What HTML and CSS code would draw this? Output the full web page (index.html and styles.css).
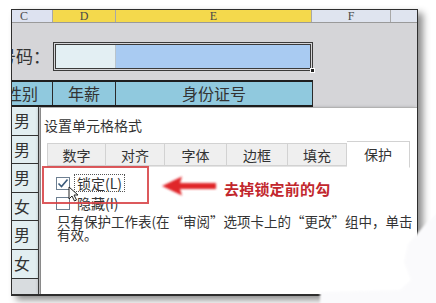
FILE: index.html
```html
<!DOCTYPE html>
<html lang="zh">
<head>
<meta charset="utf-8">
<link rel="stylesheet" href="styles.css">
</head>
<body>
<div class="page">
  <div class="sheet">
    <div class="colhead">
      <div class="ch ch-c">C</div>
      <div class="ch ch-d">D</div>
      <div class="ch ch-e">E</div>
      <div class="ch ch-f">F</div>
      <div class="ch ch-g"></div>
    </div>
    <div class="inputrow">
      <div class="lbl"><span>号码：</span></div>
      <div class="inbox">
        <div class="in-d"></div>
        <div class="in-e"></div>
        <span class="handle"></span>
      </div>
    </div>
    <div class="headrow">
      <div class="hc hc-c"><span>性别</span></div>
      <div class="hc hc-d">年薪</div>
      <div class="hc hc-e">身份证号</div>
    </div>
    <div class="datacol">
      <div class="dc">男</div>
      <div class="dc">男</div>
      <div class="dc">男</div>
      <div class="dc">女</div>
      <div class="dc">男</div>
      <div class="dc">女</div>
      <div class="dc dc-empty"></div>
    </div>

    <div class="dialog">
      <div class="dtitle">设置单元格格式</div>
      <div class="tabs">
        <div class="tab t1">数字</div>
        <div class="tab t2">对齐</div>
        <div class="tab t3">字体</div>
        <div class="tab t4">边框</div>
        <div class="tab t5">填充</div>
        <div class="tab t6 active">保护</div>
      </div>
      <div class="dbody">
        <div class="chkrow">
          <span class="chk">
            <svg width="14" height="13" viewBox="0 0 14 13"><path d="M2.5 6.5 L5.5 9.5 L11.5 2.5" fill="none" stroke="#3a5a7a" stroke-width="1.6"/></svg>
          </span>
          <span class="chklbl focus">锁定(L)</span>
        </div>
        <div class="chkrow">
          <span class="chk"></span>
          <span class="chklbl">隐藏(I)</span>
        </div>
        <div class="desc">只有保护工作表(在“审阅”选项卡上的“更改”组中，单击<br>有效。</div>
      </div>
    </div>
  </div>

  <div class="redbox"></div>
  <svg class="arrow" width="60" height="24" viewBox="0 0 60 24">
    <defs><filter id="b" x="-20%" y="-40%" width="140%" height="180%"><feGaussianBlur stdDeviation="0.8"/></filter></defs>
    <path d="M2 12 L22 2.5 L20 9 L56 9 L56 15 L20 15 L22 21.5 Z" fill="#e0262a" filter="url(#b)"/>
  </svg>
  <div class="note">去掉锁定前的勾</div>
  <svg class="cursor" width="12" height="16" viewBox="0 0 12 16">
    <path d="M1 1 L1 13 L4 10 L6.5 15 L8.5 14 L6 9 L10 9 Z" fill="#fff" stroke="#222" stroke-width="1"/>
  </svg>
  <svg class="blob" width="120" height="95" viewBox="0 0 120 95">
    <defs><filter id="s"><feGaussianBlur stdDeviation="1.2"/></filter></defs>
    <path d="M120 0 L106 14 L90 32 L86 50 L93 68 L82 78 L2 80 L2 95 L120 95 Z" fill="#fafafc" filter="url(#s)"/>
  </svg>
</div>
</body>
</html>
```
FILE: styles.css
```css
* { box-sizing: border-box; }
html, body { margin: 0; padding: 0; }
body {
  width: 436px;
  height: 303px;
  overflow: hidden;
  background: #ffffff;
  font-family: "Noto Sans CJK SC", "Noto Sans", sans-serif;
  color: #2a2a2a;
}
.page {
  position: relative;
  width: 436px;
  height: 303px;
  padding: 9px 0 0 11px;
}
.sheet {
  position: relative;
  width: 407px;
  height: 287px;
  border: 1px solid #2e2e2e;
  border-bottom-width: 2px;
  background: #d5d5d8;
  overflow: hidden;
  box-shadow: 5px 4px 7px rgba(0,0,0,0.45);
}
.colhead {
  display: flex;
  height: 13px;
  border-bottom: 1px solid #9a9a9a;
  font-family: "Liberation Serif", serif;
  font-size: 12px;
  line-height: 12px;
  color: #4a4a4a;
}
.ch { border-right: 1px solid #a8a8a8; text-align: center; }
.ch-c { width: 41px; background: #dde2f0; text-align: left; padding-left: 8px; }
.ch-d { width: 63px; background: #f4d94c; }
.ch-e { width: 196px; background: #f4d94c; }
.ch-f { width: 79px; background: #dfe4ef; }
.ch-g { flex: 1; background: #dfe4ef; border-right: none; }

.inputrow {
  display: flex;
  margin-top: 19px;
  height: 29px;
}
.lbl {
  display: flex;
  justify-content: flex-end;
  width: 41px;
  overflow: hidden;
  padding-right: 3px;
  font-size: 17px;
  line-height: 28px;
  color: #333;
}
.lbl span { white-space: nowrap; flex: none; }
.inbox {
  position: relative;
  display: flex;
  width: 260px;
  border: 3px double #3a3a3a;
}
.in-d { width: 60px; background: #e3eff3; border-right: 1px solid #b9c4cc; }
.in-e { flex: 1; background: #a9cbf2; }
.handle {
  position: absolute;
  right: -5px;
  bottom: -5px;
  width: 5px;
  height: 5px;
  background: #222;
  border: 1px solid #fff;
}

.headrow {
  display: flex;
  margin-top: 9px;
  width: 301px;
  height: 27px;
  border-top: 2px solid #1e1e1e;
  border-bottom: 2px solid #1e1e1e;
  background: #90c9de;
  font-size: 16px;
  line-height: 23px;
  color: #333;
}
.hc { border-right: 1px solid #2a2a2a; white-space: nowrap; overflow: hidden; }
.hc-c { display: flex; justify-content: flex-end; width: 41px; padding-right: 14px; }
.hc-c span { flex: none; }
.hc-d { width: 63px; text-align: center; }
.hc-e { width: 197px; text-align: center; }

.datacol {
  display: flex;
  flex-direction: column;
  width: 27px;
  border-right: 1px solid #444;
}
.dc {
  height: 28.6px;
  border-bottom: 1px solid #333;
  background: #e2eef1;
  font-size: 16px;
  line-height: 27px;
  padding-left: 2px;
  color: #333;
}
.dc-empty { background: #d8dcdf; border-bottom: none; }

.dialog {
  position: absolute;
  left: 28px;
  top: 97px;
  right: 0;
  bottom: 0;
  background: #ffffff;
  border-left: 1px solid #8a8a8a;
  border-top: 1px solid #b2b2b2;
  box-shadow: -2px 0 3px rgba(0,0,0,0.18);
}
.dtitle {
  padding: 8px 0 0 3px;
  font-size: 14px;
  line-height: 18px;
  color: #333;
}
.tabs {
  display: flex;
  margin: 9px 0 0 6px;
  height: 24px;
  border-bottom: 1px solid #e4e4e4;
  width: 363px;
}
.tab {
  background: #efefef;
  border: 1px solid #d2d2d2;
  border-left: none;
  text-align: center;
  font-size: 14px;
  line-height: 22px;
  color: #333;
}
.t1 { width: 59px; border-left: 1px solid #d2d2d2; }
.t2 { width: 59px; }
.t3 { width: 62px; }
.t4 { width: 61px; }
.t5 { width: 59px; }
.t6 { width: 63px; }
.tab.active {
  background: #ffffff;
  border-bottom-color: #ffffff;
  margin-top: -2px;
  height: 27px;
  line-height: 24px;
}
.dbody { padding: 8px 0 0 15px; }
.chkrow {
  display: flex;
  align-items: center;
  gap: 5px;
  height: 16px;
  margin-bottom: 4px;
}
.chk {
  display: block;
  width: 14px;
  height: 13px;
  border: 1px solid #6d7f91;
  background: #fff;
  line-height: 0;
}
.chk svg { margin: -1px 0 0 -1px; }
.chklbl {
  font-size: 14px;
  line-height: 14px;
  padding: 1px 2px;
  color: #333;
}
.chklbl.focus { outline: 1px dotted #555; }
.desc {
  padding-left: 1px;
  font-size: 13.5px;
  line-height: 13px;
  color: #333;
  white-space: nowrap;
}

.redbox {
  position: absolute;
  left: 42px;
  top: 166px;
  width: 107px;
  height: 38px;
  border: 2px solid rgba(214, 60, 64, 0.85);
}
.arrow {
  position: absolute;
  left: 160px;
  top: 174px;
}
.note {
  position: absolute;
  left: 224px;
  top: 179px;
  font-size: 15px;
  line-height: 20px;
  font-weight: 700;
  color: #c2272d;
  letter-spacing: 0.2px;
}
.cursor {
  position: absolute;
  left: 68px;
  top: 186px;
}
.blob {
  position: absolute;
  left: 318px;
  top: 212px;
}
```
